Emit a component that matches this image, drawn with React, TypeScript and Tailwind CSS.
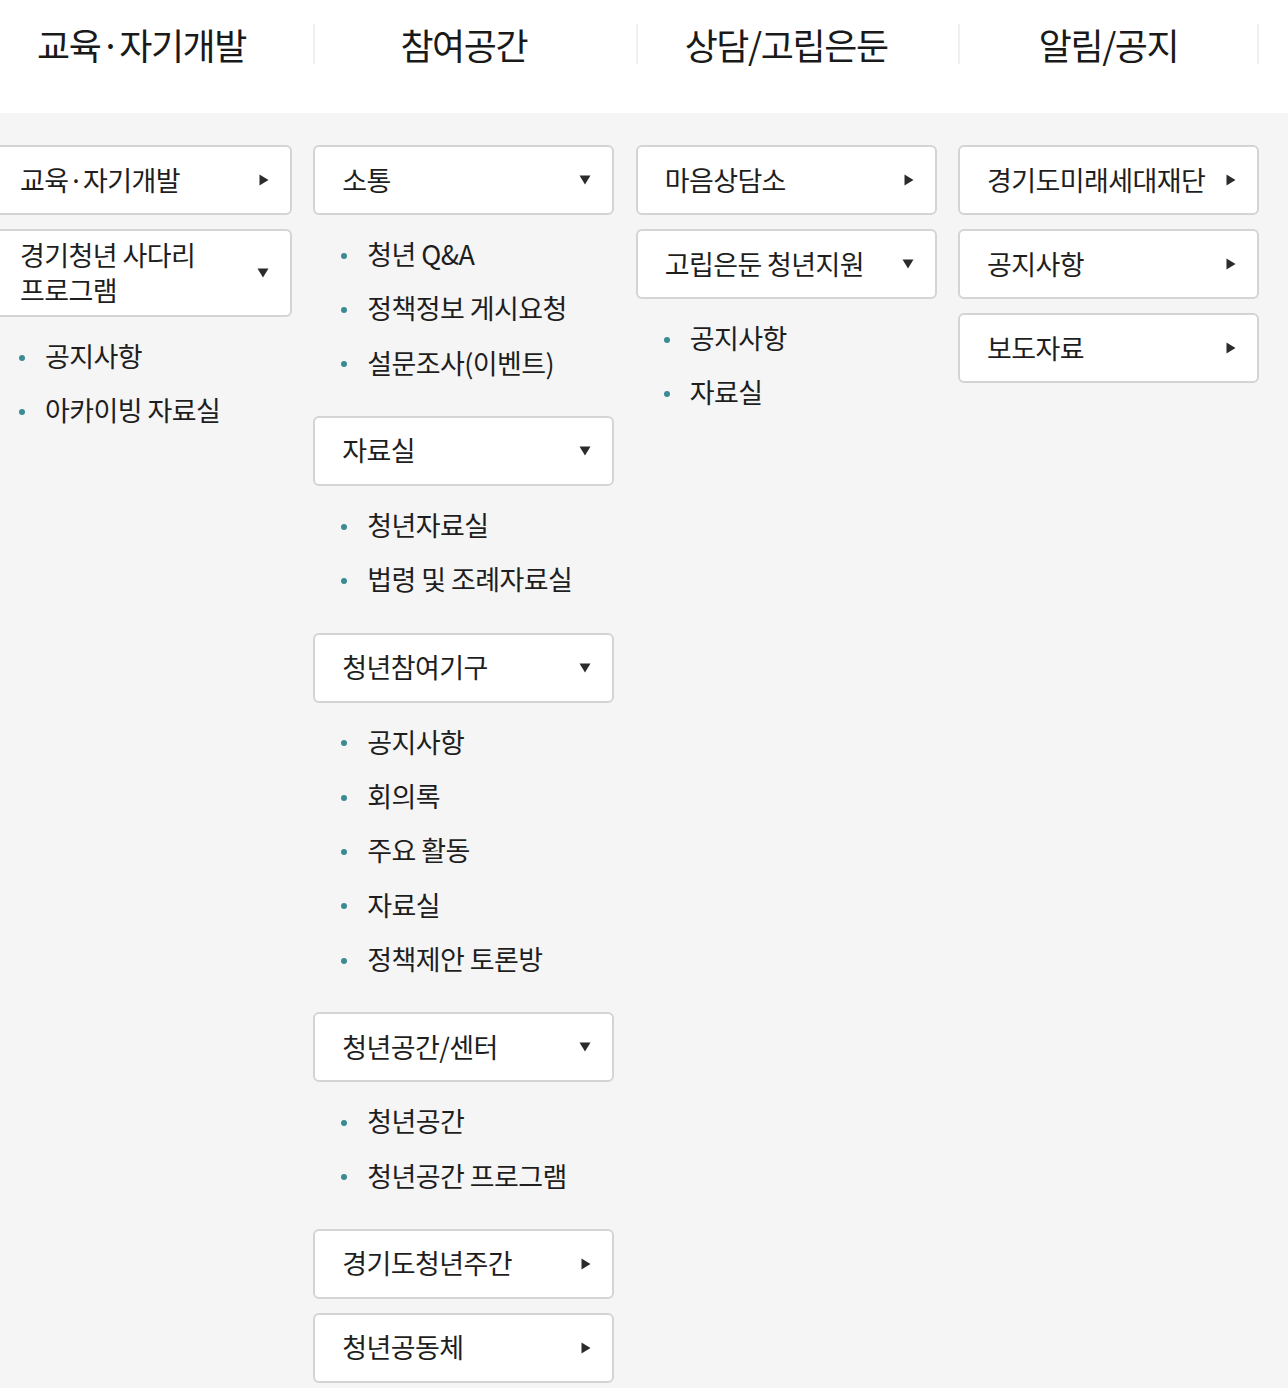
import React from "react";

type Group = { title: string[]; open?: boolean; items?: string[] };

const columns: { header: string; groups: Group[] }[] = [
  {
    header: "교육·자기개발",
    groups: [
      { title: ["교육·자기개발"] },
      { title: ["경기청년 사다리", "프로그램"], open: true, items: ["공지사항", "아카이빙 자료실"] },
    ],
  },
  {
    header: "참여공간",
    groups: [
      { title: ["소통"], open: true, items: ["청년 Q&A", "정책정보 게시요청", "설문조사(이벤트)"] },
      { title: ["자료실"], open: true, items: ["청년자료실", "법령 및 조례자료실"] },
      { title: ["청년참여기구"], open: true, items: ["공지사항", "회의록", "주요 활동", "자료실", "정책제안 토론방"] },
      { title: ["청년공간/센터"], open: true, items: ["청년공간", "청년공간 프로그램"] },
      { title: ["경기도청년주간"] },
      { title: ["청년공동체"] },
    ],
  },
  {
    header: "상담/고립은둔",
    groups: [
      { title: ["마음상담소"] },
      { title: ["고립은둔 청년지원"], open: true, items: ["공지사항", "자료실"] },
    ],
  },
  {
    header: "알림/공지",
    groups: [{ title: ["경기도미래세대재단"] }, { title: ["공지사항"] }, { title: ["보도자료"] }],
  },
];

const font = { fontFamily: '"Noto Sans CJK KR", "Noto Sans", sans-serif' };

function Down() {
  return (
    <svg width="12" height="10" viewBox="0 0 12 10" className="shrink-0">
      <path d="M0.5 0.5 L11.5 0.5 L6 9.5 Z" fill="#2b2b2b" />
    </svg>
  );
}
function Right() {
  return (
    <svg width="10" height="12" viewBox="0 0 10 12" className="shrink-0">
      <path d="M0.5 0.5 L9.5 6 L0.5 11.5 Z" fill="#2b2b2b" />
    </svg>
  );
}

function Box({ g }: { g: Group }) {
  const two = g.title.length > 1;
  return (
    <div
      className={`flex items-center justify-between bg-white border-2 border-[#d4d4d4] rounded-[6px] pl-[27px] pr-[21px] ${
        two ? "h-[88px]" : "h-[70px]"
      }`}
    >
      <div className="text-[27px] leading-[35px] text-[#1e1e1e] tracking-[-0.6px] mt-[-2px]">
        {g.title.map((t, i) => (
          <div key={i}>{t}</div>
        ))}
      </div>
      {g.open ? <Down /> : <Right />}
    </div>
  );
}

export default function App() {
  return (
    <div className="w-[1288px] h-[1388px] overflow-hidden bg-[#f5f5f5]" style={font}>
      <div className="bg-white h-[113px] pt-[24px]">
        <div className="grid grid-cols-[301px_301px_301px_301px] gap-x-[21.33px] ml-[-9px]">
          {columns.map((c, i) => (
            <div key={i} className="relative h-[40px] flex items-center justify-center">
              {i > 0 && <div className="absolute left-[0px] top-0 h-full w-[2px] bg-[#efefef]" />}
              {i === 3 && <div className="absolute right-[0px] top-0 h-full w-[2px] bg-[#efefef]" />}
              <span className="text-[36px] leading-[40px] text-[#1a1a1a] tracking-[-1.4px]">{c.header}</span>
            </div>
          ))}
        </div>
      </div>
      <div className="pt-[32px]">
        <div className="grid grid-cols-[301px_301px_301px_301px] gap-x-[21.33px] ml-[-9px] items-start">
          {columns.map((c, ci) => (
            <div key={ci} className="flex flex-col">
              {c.groups.map((g, gi) => (
                <div key={gi} className="flex flex-col">
                  <Box g={g} />
                  {g.items ? (
                    <ul className="pt-[12px] pb-[26px]">
                      {g.items.map((it, ii) => (
                        <li key={ii} className="h-[54.33px] flex items-center pl-[28px]">
                          <span className="w-[6px] h-[6px] rounded-full bg-[#3b8b94] mr-[20px] mt-[3px] shrink-0" />
                          <span className="text-[27px] text-[#1e1e1e] tracking-[-0.6px]">{it}</span>
                        </li>
                      ))}
                    </ul>
                  ) : (
                    <div className="h-[14px]" />
                  )}
                </div>
              ))}
            </div>
          ))}
        </div>
      </div>
    </div>
  );
}
